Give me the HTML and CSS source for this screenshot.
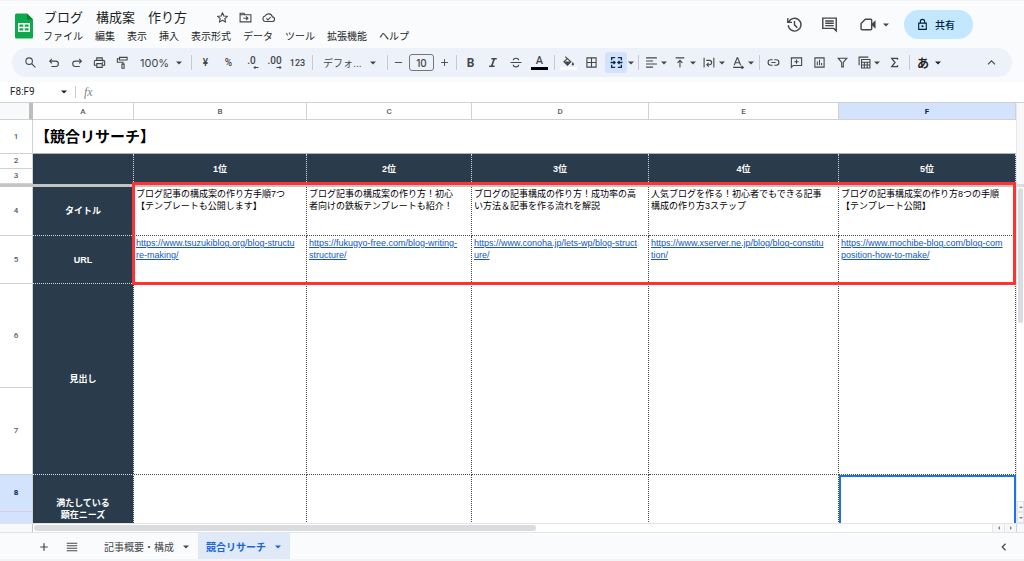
FILE: index.html
```html
<!DOCTYPE html>
<html lang="ja">
<head>
<meta charset="utf-8">
<title>ブログ　構成案　作り方</title>
<link rel="stylesheet" href="styles.css">
</head>
<body>
<svg class="defs" aria-hidden="true">
  <symbol id="down" viewBox="0 0 10 10"><path fill="currentColor" d="M0 2.500h10L5 7.500z"/></symbol>
</svg>

<header class="app-header">
  <svg class="logo" viewBox="0 0 18 25" aria-hidden="true">
    <path fill="#0fa84c" d="M1.500 0H12l6 6v17.500a1.500 1.500 0 0 1-1.500 1.500h-15A1.500 1.500 0 0 1 0 23.500v-22A1.500 1.500 0 0 1 1.500 0z"/>
    <path fill="#07802f" d="M12 0l6 6h-6z"/>
    <path fill="none" stroke="#fff" stroke-width="1.400" d="M3.700 10.200h10.600v7.600H3.700zM3.700 14h10.600M9 10.200v7.600"/>
  </svg>
  <div class="doc">
    <div class="title-row">
      <h1 class="doc-title">ブログ　構成案　作り方</h1>
      <button class="title-icon" aria-label="スター"><svg viewBox="0 0 24 24"><path class="ln" stroke-linejoin="round" d="M12 3.200l2.600 6 6.500.6-4.900 4.300 1.500 6.400-5.700-3.400-5.700 3.400 1.500-6.400L2.900 9.800l6.500-.6z"/></svg></button>
      <button class="title-icon" aria-label="移動"><svg viewBox="0 0 24 24"><path class="ln" d="M2 20V4h7l2.500 3H22v13zM2 7h10M8 13.500h8M13 10l3.500 3.500L13 17"/></svg></button>
      <button class="title-icon" aria-label="保存状況"><svg viewBox="0 0 24 24"><path class="ln" d="M6.500 19.500h12a4.300 4.300 0 0 0 .6-8.600A7.200 7.200 0 0 0 5.600 9.300 5.200 5.200 0 0 0 6.500 19.500zM8 13.500l3 3 5-5"/></svg></button>
    </div>
    <nav class="menus">
      <button>ファイル</button><button>編集</button><button>表示</button><button>挿入</button><button>表示形式</button><button>データ</button><button>ツール</button><button>拡張機能</button><button>ヘルプ</button>
    </nav>
  </div>
  <div class="actions">
    <button class="action" aria-label="変更履歴"><svg viewBox="0 0 24 24"><path class="ln" d="M4 8.500A9 9 0 1 1 3.200 13M2.500 3v6h6M12 7v5.500l4 4"/></svg></button>
    <button class="action" aria-label="コメント"><svg viewBox="0 0 24 24"><path class="ln" d="M2.500 3h19v18l-3.500-3.500H2.500zM6 7h12M6 10.300h12M6 13.600h12"/></svg></button>
    <button class="action meet" aria-label="ビデオ会議"><svg viewBox="0 0 24 24"><path class="ln" stroke-linejoin="round" d="M7.500 4.500H15a1.500 1.500 0 0 1 1.500 1.500v12a1.500 1.500 0 0 1-1.500 1.500H3A1.500 1.500 0 0 1 1.500 18v-7.500z"/><path fill="currentColor" d="M17 10.500l5-4.500v12l-5-4.500z"/></svg><svg class="arrow"><use href="#down"/></svg></button>
    <button class="share"><svg viewBox="0 0 24 24"><path class="ln" d="M5 9.500h14V21H5zM8 9V6.500a4 4 0 0 1 8 0V9"/><circle cx="12" cy="15.200" r="2" fill="currentColor"/></svg>共有</button>
  </div>
</header>

<div class="toolbar" role="toolbar">
  <button class="tool" aria-label="検索"><svg viewBox="0 0 24 24"><circle class="ln" cx="9.500" cy="9.500" r="6"/><path class="ln" d="M14 14l7 7"/></svg></button>
  <button class="tool" aria-label="元に戻す"><svg viewBox="0 0 24 24"><path class="ln" d="M9 5.500l-4 4 4 4M5.500 9.500h10.500a5 5 0 0 1 0 10H8"/></svg></button>
  <button class="tool" aria-label="やり直し"><svg viewBox="0 0 24 24"><path class="ln" d="M17 5.500l4 4-4 4M20.500 9.500H10a5 5 0 0 0 0 10h8"/></svg></button>
  <button class="tool" aria-label="印刷"><svg viewBox="0 0 24 24"><path class="ln" d="M7 8V3.500h10V8M6.500 17H2.500v-6.500A2.500 2.500 0 0 1 5 8h14a2.500 2.500 0 0 1 2.500 2.500V17h-4M7 14h10v7H7z"/><circle cx="18" cy="11.500" r="1.200" fill="currentColor"/></svg></button>
  <button class="tool" aria-label="書式を貼り付け"><svg viewBox="0 0 24 24"><path class="ln" d="M6.500 2.500h14v5h-14zM6.500 5h-4v6.500H13V15M11 15h4v7.500h-4z"/></svg></button>
  <label class="drop zoom"><select aria-label="ズーム"><option>100%</option></select><svg class="arrow"><use href="#down"/></svg></label>
  <span class="sep"></span>
  <button class="tool">¥</button>
  <button class="tool">%</button>
  <button class="tool decimal" aria-label="小数点以下の桁数を減らす">.0<svg viewBox="0 0 12 8"><path class="ln" d="M11 4H2M5 1L2 4l3 3"/></svg></button>
  <button class="tool decimal" aria-label="小数点以下の桁数を増やす">.00<svg viewBox="0 0 12 8"><path class="ln" d="M1 4h9M7 1l3 3-3 3"/></svg></button>
  <button class="tool digits">123</button>
  <span class="sep"></span>
  <label class="drop font"><select aria-label="フォント"><option>デフォ...</option></select><svg class="arrow"><use href="#down"/></svg></label>
  <span class="sep"></span>
  <button class="tool step" aria-label="縮小"><svg viewBox="0 0 24 24"><path class="ln" d="M4 12h16"/></svg></button>
  <input class="size" aria-label="フォントサイズ" value="10">
  <button class="tool step" aria-label="拡大"><svg viewBox="0 0 24 24"><path class="ln" d="M4.500 12h15M12 4.500v15"/></svg></button>
  <span class="sep"></span>
  <button class="tool letter">B</button>
  <button class="tool" aria-label="斜体"><svg viewBox="0 0 24 24"><path class="ln bold" d="M8 5h10M4 19h10M13.500 5l-5 14"/></svg></button>
  <button class="tool" aria-label="取り消し線"><svg viewBox="0 0 24 24"><path class="ln" d="M1 12h20M16 8c0-2.500-2-4-5-4S6 5.500 6 8M6 16c0 2.500 2 4 5 4s5-1.500 5-4"/></svg></button>
  <button class="tool text-color">A</button>
  <span class="sep"></span>
  <button class="tool fill-color" aria-label="塗りつぶしの色"><svg viewBox="0 0 24 24"><path class="ln" d="M6 3l10.500 9.500-6.500 6.500-6.500-6.500L10 6.500"/><path fill="currentColor" d="M4 12h12.500L10 19zM20 13c3 4 2.500 6.500 0 6.500s-3-2.500 0-6.500z"/></svg></button>
  <button class="tool" aria-label="枠線"><svg viewBox="0 0 24 24"><path class="ln" d="M3.500 3.500h17v17h-17zM12 3.500v17M3.500 12h17"/></svg></button>
  <button class="tool merge" aria-label="セルを結合"><svg viewBox="0 0 24 24"><path class="ln mid" d="M9.500 3H3v5M14.500 3H21v5M9.500 21H3v-5M14.500 21H21v-5M1 12h8M6.500 9l3 3-3 3M23 12h-8M17.500 9l-3 3 3 3"/></svg></button>
  <button class="tool caret" aria-label="結合の種類"><svg class="arrow"><use href="#down"/></svg></button>
  <span class="sep"></span>
  <button class="group" aria-label="水平方向の配置"><svg viewBox="0 0 24 24"><path class="ln" d="M2 3.500h20M2 9.200h13M2 14.800h20M2 20.500h13"/></svg><svg class="arrow"><use href="#down"/></svg></button>
  <button class="group" aria-label="垂直方向の配置"><svg viewBox="0 0 24 24"><path class="ln" d="M3 3.500h16M11 21V8M6.500 12.500L11 8l4.500 4.500"/></svg><svg class="arrow"><use href="#down"/></svg></button>
  <button class="group" aria-label="テキストを折り返す"><svg viewBox="0 0 24 24"><path class="ln" d="M2 3v18M20 3v18M6 8h6a3.500 3.500 0 0 1 0 8H7M10.500 12.500L7 16l3.500 3.500"/></svg><svg class="arrow"><use href="#down"/></svg></button>
  <button class="group" aria-label="テキストの回転"><svg viewBox="0 0 24 24"><path class="ln" d="M4 17L9.500 3.500h1L16 17M6 12.500h8M2 21h18M17.500 18l3.500 3-3.500 3"/></svg><svg class="arrow"><use href="#down"/></svg></button>
  <span class="sep narrow"></span>
  <button class="tool" aria-label="リンク"><svg viewBox="0 0 24 24"><path class="ln" d="M10.500 7H7a5 5 0 0 0 0 10h3.500M13.500 7H17a5 5 0 0 1 0 10h-3.500M8 12h8"/></svg></button>
  <button class="tool" aria-label="コメントを挿入"><svg viewBox="0 0 24 24"><path class="ln" d="M2.500 21V3.500h19v14H6zM12 6.500v8M8 10.500h8"/></svg></button>
  <button class="tool" aria-label="グラフ"><svg viewBox="0 0 24 24"><path class="ln" d="M3.500 3.500h17v17h-17zM8 10v7M12 7v10M16 13v4"/></svg></button>
  <button class="tool" aria-label="フィルタ"><svg viewBox="0 0 24 24"><path class="ln" d="M4 4h16l-6.500 8v8h-3v-8z"/></svg></button>
  <button class="group" aria-label="フィルタ表示"><svg viewBox="0 0 24 24"><path class="ln" d="M2 17V2h17M6.500 6.500H22V22H6.500zM6.500 11.500H22M6.500 16.500H22M11.700 11.500V22M17 11.500V22"/></svg><svg class="arrow"><use href="#down"/></svg></button>
  <button class="tool" aria-label="関数"><svg viewBox="0 0 24 24"><path class="ln mid" d="M17.500 7V4.500H7l6 7.500-6 7.500h10.500V17"/></svg></button>
  <span class="sep"></span>
  <button class="group ime">あ<svg class="arrow"><use href="#down"/></svg></button>
  <button class="tool collapse" aria-label="メニューを非表示"><svg viewBox="0 0 24 24"><path class="ln" d="M5.500 15.500L12 9l6.500 6.500"/></svg></button>
</div>

<div class="formula-bar">
  <label class="name-box"><input aria-label="名前ボックス" value="F8:F9"><svg class="arrow"><use href="#down"/></svg></label>
  <span class="fx">fx</span>
  <input class="formula" aria-label="数式">
</div>

<main class="sheet">
  <div class="grid">
    <table>
      <colgroup><col class="c-head"><col class="c-a"><col class="c-b"><col class="c-c"><col class="c-d"><col class="c-e"><col class="c-f"></colgroup>
      <thead>
        <tr><th class="corner"></th><th>A</th><th>B</th><th>C</th><th>D</th><th>E</th><th class="picked">F</th></tr>
      </thead>
      <tbody>
        <tr class="r1"><th>1</th><td class="heading" colspan="6">【競合リサーチ】</td></tr>
        <tr class="r2"><th>2</th><td class="dark rank" rowspan="2"></td><td class="dark rank" rowspan="2">1位</td><td class="dark rank" rowspan="2">2位</td><td class="dark rank" rowspan="2">3位</td><td class="dark rank" rowspan="2">4位</td><td class="dark rank" rowspan="2">5位</td></tr>
        <tr class="r3"><th>3</th></tr>
        <tr class="freeze"><td colspan="7"></td></tr>
        <tr class="r4"><th>4</th><td class="dark">タイトル</td>
          <td>ブログ記事の構成案の作り方手順7つ<br>【テンプレートも公開します】</td>
          <td>ブログ記事の構成案の作り方！初心<br>者向けの鉄板テンプレートも紹介！</td>
          <td>ブログの記事構成の作り方！成功率の高<br>い方法＆記事を作る流れを解説</td>
          <td>人気ブログを作る！初心者でもできる記事<br>構成の作り方3ステップ</td>
          <td>ブログの記事構成案の作り方8つの手順<br>【テンプレート公開】</td></tr>
        <tr class="r5"><th>5</th><td class="dark">URL</td>
          <td><a href="#">https://www.tsuzukiblog.org/blog-structu<br>re-making/</a></td>
          <td><a href="#">https://fukugyo-free.com/blog-writing-<br>structure/</a></td>
          <td><a href="#">https://www.conoha.jp/lets-wp/blog-struct<br>ure/</a></td>
          <td><a href="#">https://www.xserver.ne.jp/blog/blog-constitu<br>tion/</a></td>
          <td><a href="#">https://www.mochibe-blog.com/blog-com<br>position-how-to-make/</a></td></tr>
        <tr class="r6"><th>6</th><td class="dark" rowspan="2">見出し</td><td rowspan="2"></td><td rowspan="2"></td><td rowspan="2"></td><td rowspan="2"></td><td rowspan="2"></td></tr>
        <tr class="r7"><th>7</th></tr>
        <tr class="r8"><th class="picked">8</th><td class="dark" rowspan="2">満たしている<br>顕在ニーズ</td><td rowspan="2"></td><td rowspan="2"></td><td rowspan="2"></td><td rowspan="2"></td><td class="selected" rowspan="2"></td></tr>
        <tr class="r9"><th class="picked"></th></tr>
      </tbody>
    </table>
    <div class="callout"></div>
  </div>
  <div class="v-scroll">
    <div class="v-top"></div>
    <div class="v-thumb"></div>
    <button class="scroll-btn up" aria-label="上へ"><svg class="arrow"><use href="#down"/></svg></button>
    <button class="scroll-btn" aria-label="下へ"><svg class="arrow"><use href="#down"/></svg></button>
  </div>
</main>
<div class="h-scroll">
  <div class="h-track"><div class="h-thumb"></div></div>
  <button class="scroll-btn left" aria-label="左へ"><svg class="arrow"><use href="#down"/></svg></button>
  <button class="scroll-btn right" aria-label="右へ"><svg class="arrow"><use href="#down"/></svg></button>
  <span class="h-end"></span>
</div>

<footer class="tabs">
  <button class="tab-icon" aria-label="シートを追加"><svg viewBox="0 0 24 24"><path class="ln mid" d="M4.500 12h15M12 4.500v15"/></svg></button>
  <button class="tab-icon" aria-label="すべてのシート"><svg viewBox="0 0 24 24"><path class="ln mid" d="M1.500 4.500h21M1.500 9.500h21M1.500 14.500h21M1.500 19.500h21"/></svg></button>
  <button class="tab">記事概要・構成<svg class="arrow"><use href="#down"/></svg></button>
  <button class="tab active">競合リサーチ<svg class="arrow"><use href="#down"/></svg></button>
  <button class="tab-icon side" aria-label="サイドパネルを表示"><svg viewBox="0 0 24 24"><path class="ln mid" d="M15 5.500L8.500 12l6.500 6.500"/></svg></button>
</footer>
</body>
</html>
```
FILE: styles.css
```css
* { box-sizing: border-box; }

body {
  margin: 0;
  height: 100vh;
  display: flex;
  flex-direction: column;
  overflow: hidden;
  background: #f9fbfd;
  color: #1f1f1f;
  font: 10px/12px "Liberation Sans", "Noto Sans CJK JP", sans-serif;
}

button, input, select {
  margin: 0;
  padding: 0;
  border: 0;
  background: none;
  color: inherit;
  font: inherit;
}

select { appearance: none; }

.defs { position: absolute; width: 0; height: 0; }
.ln { fill: none; stroke: currentColor; stroke-width: 2; }
.ln.mid { stroke-width: 2.4; }
.ln.bold { stroke-width: 3; }
.arrow { width: 6px; height: 6px; flex: none; }

/* Header */
.app-header {
  display: flex;
  height: 48px;
  flex: none;
  padding: 0 51px 0 15px;
  border-top: 1px solid #f3f4f5;
}
.logo { width: 18px; height: 26px; margin-top: 12px; }
.doc { padding: 5px 0 0 11px; }
.title-row { display: flex; align-items: center; height: 21px; }
.doc-title {
  margin: 0 24px 0 0;
  font: 13px/20px "Noto Sans CJK JP", sans-serif;
}
.title-icon { width: 23px; height: 12px; display: flex; justify-content: center; color: #444746; }
.title-icon svg { width: 13px; height: 13px; }
.menus { display: flex; gap: 12px; height: 18px; align-items: center; margin-left: -1px; }
.menus button { white-space: nowrap; font-family: "Noto Sans CJK JP", sans-serif; }
.actions { display: flex; align-items: center; margin-left: auto; color: #444746; }
.action { width: 35px; height: 28px; display: flex; align-items: center; justify-content: center; }
.action svg { width: 17px; height: 17px; }
.action .arrow { width: 6px; height: 6px; margin-left: 6px; }
.meet { width: 55px; }
.share {
  display: flex;
  align-items: center;
  gap: 6px;
  height: 29px;
  margin-left: 2px;
  padding: 0 18px 0 12px;
  border-radius: 15px;
  background: #c2e7ff;
  color: #001d35;
  font-family: "Noto Sans CJK JP", sans-serif;
  font-weight: 500;
}
.share svg { width: 13px; height: 13px; }

/* Toolbar */
.toolbar {
  display: flex;
  align-items: center;
  flex: none;
  height: 29px;
  margin: 0 12px 5px;
  padding: 0 9px 0 7px;
  border-radius: 15px;
  background: #edf2fa;
  color: #444746;
}
.tool {
  display: flex;
  align-items: center;
  justify-content: center;
  flex: none;
  width: 23px;
  height: 21px;
  font: 500 10px/12px Roboto, sans-serif;
}
.tool svg { width: 13px; height: 13px; }
.tool .arrow, .group .arrow { width: 6px; height: 6px; }
.drop { display: flex; align-items: center; justify-content: space-between; flex: none; padding: 0 6px; }
.drop select { font: 11px/14px Inter, "Noto Sans CJK JP", sans-serif; }
.zoom { width: 54px; }
.font { width: 69px; padding: 0 8px; }
.font select { font-size: 10px; }
.sep { width: 6px; height: 15px; flex: none; }
.sep::before { content: ""; display: block; width: 1px; height: 15px; margin: 0 auto; background: #c7cbd1; }
.narrow { width: 5px; }
.decimal { flex-direction: column; align-items: center; line-height: 9px; height: 15px; }
.decimal svg { width: 6px; height: 5px; margin-left: 9px; }
.digits { font-size: 9px; }
.step { width: 17px; }
.step svg { width: 11px; height: 11px; }
.size {
  width: 25px;
  height: 17px;
  margin: 0 2px;
  flex: none;
  border: 1px solid #747775;
  border-radius: 3px;
  text-align: center;
  font: 500 10px/15px Inter, sans-serif;
}
.letter { font-size: 12px; font-weight: 700; }
.text-color, .fill-color { width: 17px; margin: 0 3px; height: 15px; border-bottom: 3px solid #000; font-size: 11px; }
.fill-color { border-color: #fff; }
.merge { width: 22px; margin-left: 2px; border-radius: 3px; background: #d3e3fd; color: #0b2a5c; }
.caret { width: 8px; }
.group { display: flex; align-items: center; flex: none; width: 29px; height: 21px; padding-left: 4px; gap: 3px; }
.group svg { width: 13px; height: 13px; }
.ime { width: 34px; gap: 6px; padding-left: 5px; font: 700 12px/14px "Noto Sans CJK JP", sans-serif; color: #1f1f1f; }
.collapse { margin-left: auto; }

/* Formula bar */
.formula-bar {
  display: flex;
  align-items: center;
  flex: none;
  height: 21px;
  padding-left: 10px;
  border-bottom: 1px solid #cfd1d3;
  background: #fff;
}
.name-box { display: flex; align-items: center; width: 66px; height: 12px; padding-right: 8px; border-right: 1px solid #c7cbd1; }
.name-box input { flex: 1; min-width: 0; font: 10px/12px Roboto, sans-serif; }
.fx { width: 24px; padding-left: 8px; color: #80868b; font: italic 12px/12px "Liberation Serif", serif; }
.formula { flex: 1; }

/* Grid */
.sheet { display: flex; flex: 1; min-height: 0; background: #fff; overflow: hidden; }
.grid { position: relative; flex: 1; min-width: 0; overflow: hidden; }
table { width: 100%; table-layout: fixed; border-spacing: 0; }
.c-head { width: 33px; }
.c-a { width: 101px; }
.c-b { width: 173px; }
.c-c { width: 165px; }
.c-d { width: 177px; }
.c-e { width: 190px; }
.c-f { width: 177px; }

th {
  padding: 0;
  border: solid #cfd1d3;
  border-width: 0 1px 1px 0;
  color: #575b5f;
  font: 500 8px/10px Roboto, sans-serif;
}
thead th { height: 17px; padding-top: 1px; }
.corner { border-right: 4px solid #bdbdbd; background: #f8f9fa; }
.picked { background: #d3e3fd; color: #041e49; font-weight: 700; }

td {
  padding: 1px 0 0 2px;
  border: dotted #4a4a4a;
  border-width: 0 1px 1px 0;
  vertical-align: top;
  white-space: nowrap;
  font: 9px/12px "Liberation Sans", "Noto Sans CJK JP", sans-serif;
  color: #000;
}
td a { color: #1155cc; }
.heading {
  padding: 0 0 0 2px;
  border: solid #aeb4ba;
  border-width: 0 0 1px;
  vertical-align: middle;
  font-size: 15px;
  line-height: 20px;
  font-weight: 700;
}
.dark {
  padding: 0;
  border-color: #d5d9dd;
  background: #2a3b4b;
  color: #fff;
  font-weight: 700;
  text-align: center;
  vertical-align: middle;
}
.rank { border-bottom: 0; }
.r1 { height: 34px; }
.r2 { height: 15px; }
.r3 { height: 15px; }
.freeze td { height: 3px; padding: 0; border: 0; background: #c4c4c4; line-height: 0; }
.r4 { height: 49px; }
.r5 { height: 48px; }
.r6 { height: 104px; }
.r7 { height: 87px; }
.r8 { height: 37px; }
.r9 { height: 32px; }
.selected { border: 2px solid #1a73e8; }

.callout {
  position: absolute;
  top: 79px;
  left: 132px;
  right: 0;
  height: 103px;
  border: 3px solid #ff3131;
}

/* Scrollbars */
.v-scroll { display: flex; flex-direction: column; flex: none; width: 8px; border-left: 1px solid #e8eaed; }
.v-top { height: 84px; flex: none; border-bottom: 3px solid #dadce0; background: #f8f8f8; }
.v-thumb { height: 135px; margin: 1px 1px auto 1px; border-radius: 4px; background: #dadce0; }
.scroll-btn { display: flex; align-items: center; justify-content: center; flex: none; height: 11px; border: 1px solid #e3e4e6; background: #f8f8f8; color: #80868b; }
.scroll-btn .arrow { width: 4px; height: 4px; }
.up .arrow { transform: rotate(180deg); }
.left .arrow { transform: rotate(90deg); }
.right .arrow { transform: rotate(270deg); }
.h-scroll { display: flex; flex: none; height: 10px; padding-left: 32px; border: solid #e3e4e6; border-width: 1px 0; background: #f8f9fa; }
.h-scroll .scroll-btn { width: 12px; height: 8px; border-width: 0 0 0 1px; }
.h-track { flex: 1; padding: 1px; border-left: 1px solid #c4c4c4; background: #fff; }
.h-thumb { width: 52.5%; height: 6px; border-radius: 3px; background: #dadce0; }
.h-end { width: 8px; border-left: 1px solid #cfd1d3; }

/* Sheet tabs */
.tabs { display: flex; flex: none; height: 28px; padding: 0 9px 0 30px; border-bottom: 2px solid #f3f4f5; color: #444746; }
.tab-icon { display: flex; align-items: center; justify-content: center; width: 28px; padding-top: 2px; }
.tab-icon svg { width: 12px; height: 12px; }
.tab {
  display: flex;
  align-items: center;
  gap: 9px;
  margin-left: 10px;
  padding: 2px 9px 0 8px;
  font-family: "Noto Sans CJK JP", sans-serif;
  white-space: nowrap;
}
.tab.active { margin-left: 0; background: #dfe9f8; color: #1967d2; font-weight: 700; }
.side { width: 22px; margin-left: auto; }
```
